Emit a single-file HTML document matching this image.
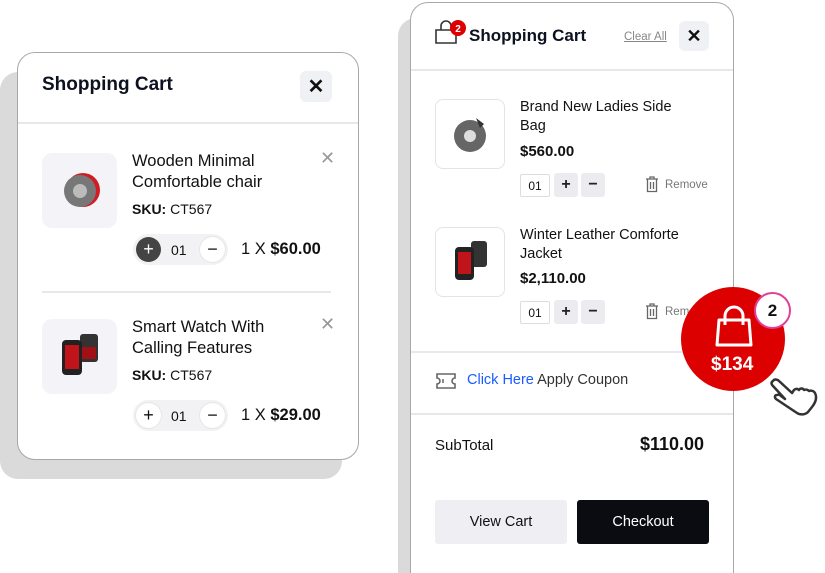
<!DOCTYPE html>
<html style="width:825px;height:573px;overflow:hidden"><head><meta charset="utf-8"><style>
*{box-sizing:border-box;margin:0;padding:0}
body{width:825px;height:573px;background:#fff;font-family:"Liberation Sans",sans-serif;color:#111;position:relative;overflow:hidden}
.abs{position:absolute}
.card{position:absolute;background:#fff;border:1.5px solid #a8a8a8;border-radius:18px}
.t{position:absolute;white-space:nowrap}
.img{position:absolute;background:#f4f4f8;border-radius:10px}
.img2{position:absolute;background:#fff;border:1px solid #e3e3e8;border-radius:8px}
.hr{position:absolute;height:1.5px;background:#e8e8ec}
.rb{position:absolute;border-radius:50%;background:#fff;box-shadow:0 0 0 1px #e6e6ea;display:flex;align-items:center;justify-content:center;font-size:18px}
.sq{position:absolute;background:#ececf0;border-radius:3px;display:flex;align-items:center;justify-content:center;font-size:16px;font-weight:bold;color:#222}
</style></head><body>
<div class="abs" style="left:0;top:72px;width:342px;height:407px;background:#dadada;border-radius:18px"></div>
<div class="card" style="left:17px;top:52px;width:342px;height:408px"></div>
<div class="t" style="left:42px;top:74px;font-size:19px;font-weight:bold;color:#0d1220">Shopping Cart</div>
<div class="abs" style="left:300px;top:71px;width:32px;height:31px;background:#f0f1f4;border-radius:6px;display:flex;align-items:center;justify-content:center;font-size:20px;font-weight:bold">✕</div>
<div class="hr" style="left:18px;top:122px;width:340px"></div>
<div class="img" style="left:42px;top:153px;width:75px;height:75px"></div>
<svg class="abs" style="left:63px;top:170px" width="38" height="40"><circle cx="20" cy="20" r="17" fill="#d01c22"/><circle cx="17" cy="21" r="16" fill="#777"/><circle cx="17" cy="21" r="7" fill="#bbb"/></svg>
<div class="t" style="left:132px;top:151px;font-size:16.5px;line-height:21px">Wooden Minimal<br>Comfortable chair</div>
<div class="t" style="left:132px;top:201px;font-size:14px"><b>SKU:</b> CT567</div>
<div class="t" style="left:320px;top:148px;font-size:18px;color:#999">✕</div>
<div class="abs" style="left:133px;top:234px;width:95px;height:31px;background:#f2f2f5;border-radius:16px"></div>
<div class="rb" style="left:136px;top:237px;width:25px;height:25px;background:#444;color:#fff;box-shadow:none">+</div>
<div class="t" style="left:171px;top:242px;font-size:14px">01</div>
<div class="rb" style="left:200px;top:237px;width:25px;height:25px">−</div>
<div class="t" style="left:241px;top:240px;font-size:16.5px">1 X <b>$60.00</b></div>
<div class="hr" style="left:42px;top:291px;width:289px"></div>
<div class="img" style="left:42px;top:319px;width:75px;height:75px"></div>
<svg class="abs" style="left:60px;top:333px" width="42" height="46"><rect x="20" y="1" width="18" height="28" rx="3" fill="#333"/><rect x="2" y="7" width="20" height="35" rx="4" fill="#222"/><rect x="5" y="12" width="14" height="24" fill="#c0141a"/><rect x="22" y="14" width="14" height="12" fill="#a01015"/></svg>
<div class="t" style="left:132px;top:317px;font-size:16.5px;line-height:21px">Smart Watch With<br>Calling Features</div>
<div class="t" style="left:132px;top:367px;font-size:14px"><b>SKU:</b> CT567</div>
<div class="t" style="left:320px;top:314px;font-size:18px;color:#999">✕</div>
<div class="abs" style="left:133px;top:400px;width:95px;height:31px;background:#f2f2f5;border-radius:16px"></div>
<div class="rb" style="left:136px;top:403px;width:25px;height:25px">+</div>
<div class="t" style="left:171px;top:408px;font-size:14px">01</div>
<div class="rb" style="left:200px;top:403px;width:25px;height:25px">−</div>
<div class="t" style="left:241px;top:406px;font-size:16.5px">1 X <b>$29.00</b></div>

<div class="abs" style="left:398px;top:18px;width:20px;height:555px;background:#dadada;border-radius:18px 0 0 0"></div>
<div class="card" style="left:410px;top:2px;width:324px;height:571px;border-bottom:none;border-radius:18px 18px 0 0"></div>
<svg class="abs" style="left:434px;top:19px" width="34" height="28"><path d="M2 24V11h20v13z M7 11V7a5 5 0 0 1 10 0v4" fill="none" stroke="#333" stroke-width="1.6"/><circle cx="24" cy="9" r="8" fill="#d00"/><text x="24" y="13" font-size="10" fill="#fff" text-anchor="middle" font-family="Liberation Sans" font-weight="bold">2</text></svg>
<div class="t" style="left:469px;top:26px;font-size:17px;font-weight:bold;color:#0d1220">Shopping Cart</div>
<div class="t" style="left:624px;top:31px;font-size:11.5px;color:#888;text-decoration:underline">Clear All</div>
<div class="abs" style="left:679px;top:21px;width:30px;height:30px;background:#f0f1f4;border-radius:6px;display:flex;align-items:center;justify-content:center;font-size:18px;font-weight:bold">✕</div>
<div class="hr" style="left:411px;top:69px;width:322px"></div>
<div class="img2" style="left:435px;top:99px;width:70px;height:70px"></div>
<svg class="abs" style="left:452px;top:112px" width="38" height="44"><circle cx="18" cy="24" r="16" fill="#666"/><circle cx="18" cy="24" r="6" fill="#ddd"/><path d="M24 6 l8 6 -4 4z" fill="#333"/></svg>
<div class="t" style="left:520px;top:98px;font-size:14.5px;line-height:19px">Brand New Ladies Side<br>Bag</div>
<div class="t" style="left:520px;top:143px;font-size:15px;font-weight:bold">$560.00</div>
<div class="abs" style="left:520px;top:174px;width:30px;height:23px;border:1px solid #ddd;border-radius:2px;font-size:12px;display:flex;align-items:center;justify-content:center">01</div>
<div class="sq" style="left:554px;top:173px;width:24px;height:24px">+</div>
<div class="sq" style="left:581px;top:173px;width:24px;height:24px">−</div>
<svg class="abs" style="left:645px;top:176px" width="14" height="17"><path d="M1 3h12M5 3V1h4v2M2.5 3.5v12h9v-12M5.5 6v7M8.5 6v7" fill="none" stroke="#666" stroke-width="1.3"/></svg>
<div class="t" style="left:665px;top:179px;font-size:11.5px;color:#777">Remove</div>
<div class="img2" style="left:435px;top:227px;width:70px;height:70px"></div>
<svg class="abs" style="left:451px;top:240px" width="42" height="46"><rect x="20" y="1" width="16" height="26" rx="3" fill="#333"/><rect x="4" y="7" width="19" height="33" rx="4" fill="#222"/><rect x="7" y="12" width="13" height="22" fill="#c0141a"/></svg>
<div class="t" style="left:520px;top:226px;font-size:14.5px;line-height:19px">Winter Leather Comforte<br>Jacket</div>
<div class="t" style="left:520px;top:270px;font-size:15px;font-weight:bold">$2,110.00</div>
<div class="abs" style="left:520px;top:301px;width:30px;height:23px;border:1px solid #ddd;border-radius:2px;font-size:12px;display:flex;align-items:center;justify-content:center">01</div>
<div class="sq" style="left:554px;top:300px;width:24px;height:24px">+</div>
<div class="sq" style="left:581px;top:300px;width:24px;height:24px">−</div>
<svg class="abs" style="left:645px;top:303px" width="14" height="17"><path d="M1 3h12M5 3V1h4v2M2.5 3.5v12h9v-12M5.5 6v7M8.5 6v7" fill="none" stroke="#666" stroke-width="1.3"/></svg>
<div class="t" style="left:665px;top:306px;font-size:11.5px;color:#777">Remove</div>
<div class="hr" style="left:411px;top:351px;width:322px"></div>
<svg class="abs" style="left:435px;top:372px" width="22" height="18"><path d="M2 2h18v4a3 3 0 0 0 0 6v4H2v-4a3 3 0 0 0 0-6z" fill="none" stroke="#666" stroke-width="1.6"/><path d="M8 7v4" stroke="#666" stroke-width="1.5"/></svg>
<div class="t" style="left:467px;top:372px;font-size:14.5px"><span style="color:#1a5cff">Click Here</span> <span style="color:#333">Apply Coupon</span></div>
<div class="hr" style="left:411px;top:413px;width:322px"></div>
<div class="t" style="left:435px;top:437px;font-size:15px">SubTotal</div>
<div class="t" style="left:640px;top:434px;font-size:18px;font-weight:bold">$110.00</div>
<div class="abs" style="left:435px;top:500px;width:132px;height:44px;background:#efeff3;border-radius:3px;display:flex;align-items:center;justify-content:center;font-size:14.5px">View Cart</div>
<div class="abs" style="left:577px;top:500px;width:132px;height:44px;background:#0b0c12;border-radius:3px;display:flex;align-items:center;justify-content:center;font-size:14.5px;color:#fff">Checkout</div>

<div class="abs" style="left:681px;top:287px;width:104px;height:104px;border-radius:50%;background:#dd0000"></div>
<svg class="abs" style="left:714px;top:305px" width="40" height="44"><path d="M3 40L5 15h30l2 25z" fill="none" stroke="#fff" stroke-width="3" stroke-linejoin="round"/><path d="M11 20V11a9 9 0 0 1 18 0v9" fill="none" stroke="#fff" stroke-width="3"/></svg>
<div class="t" style="left:711px;top:354px;font-size:19px;font-weight:bold;color:#fff">$134</div>
<div class="abs" style="left:754px;top:292px;width:37px;height:37px;border-radius:50%;background:#fff;border:2.5px solid #e0409a;display:flex;align-items:center;justify-content:center;font-size:17px;font-weight:bold">2</div>
<svg class="abs" style="left:768px;top:375px" width="54" height="42"><path d="M5 6c1-2 4-2 6 0l13 12 2-3c2-2 4-1 5 0 1-2 4-2 5 0 2-1 4 0 5 1 2-1 5 0 6 2 2 4 1 9-3 14l-4 5c-3 3-8 3-11 1L8 24c-2-2-1-4 1-4 2-1 4 1 4 1l4 3L5 11C3 9 3 7 5 6z" fill="#fff" stroke="#333" stroke-width="2.5" stroke-linejoin="round"/></svg>
</body></html>
